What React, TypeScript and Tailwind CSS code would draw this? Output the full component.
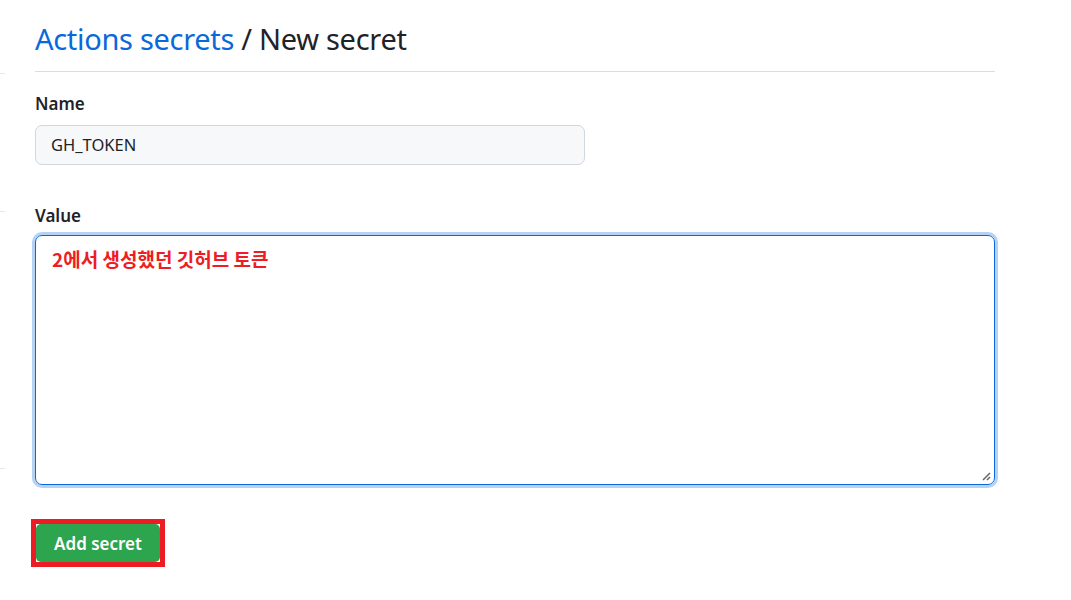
import React from "react";

const App: React.FC = () => {
  return (
    <div className="flex min-h-[600px] w-[1071px] bg-white font-['Noto_Sans',sans-serif] text-[#1f2328]">
      {/* sidebar edge */}
      <div className="w-[5px] shrink-0">
        <div className="mt-[73px] h-px bg-[#e5e7eb]" />
        <div className="mt-[137px] h-px bg-[#e5e7eb]" />
        <div className="mt-[256px] h-px bg-[#e5e7eb]" />
      </div>

      <div className="ml-[30px] w-[960px]">
        <div className="flex h-[72px] items-center border-b border-[#d8dee4] pt-[6px]">
          <h2 className="text-[29px] leading-none tracking-[-0.3px]">
            <a className="text-[#0969da]">Actions secrets</a>
            <span> / New secret</span>
          </h2>
        </div>

        <div className="mt-[20px]">
          <label className="block text-[17px] font-semibold leading-[24px]">Name</label>
          <div className="mt-[9px] flex h-[40px] w-[550px] items-center rounded-[7px] border border-[#d0d7de] bg-[#f6f8fa] px-[15px] text-[16.5px]">
            GH_TOKEN
          </div>
        </div>

        <div className="mt-[39px]">
          <label className="block text-[17px] font-semibold leading-[24px]">Value</label>
          <div className="relative mt-[7px] h-[250px] rounded-[7px] border border-[#0969da] px-[16px] pt-[9px] shadow-[0_0_0_3px_rgba(9,105,218,0.3)]">
            <span className="font-['Noto_Sans_CJK_KR',sans-serif] text-[19px] font-bold text-[#ee1c24]">
              2에서 생성했던 깃허브 토큰
            </span>
            <svg className="absolute bottom-[3px] right-[3px]" width="10" height="10" viewBox="0 0 10 10">
              <path d="M9 2 L2 9 M9 6 L6 9" stroke="#666" strokeWidth="1.5" />
            </svg>
          </div>
        </div>

        <div className="mt-[34px] w-fit border-[5px] border-[#ed1c24] -ml-[4px]">
          <button className="flex h-[38px] w-[124px] items-center justify-center rounded-[5px] bg-[#2da44e] pt-[2px] text-[17px] font-semibold text-white">
            Add secret
          </button>
        </div>
      </div>
    </div>
  );
};

export default App;
